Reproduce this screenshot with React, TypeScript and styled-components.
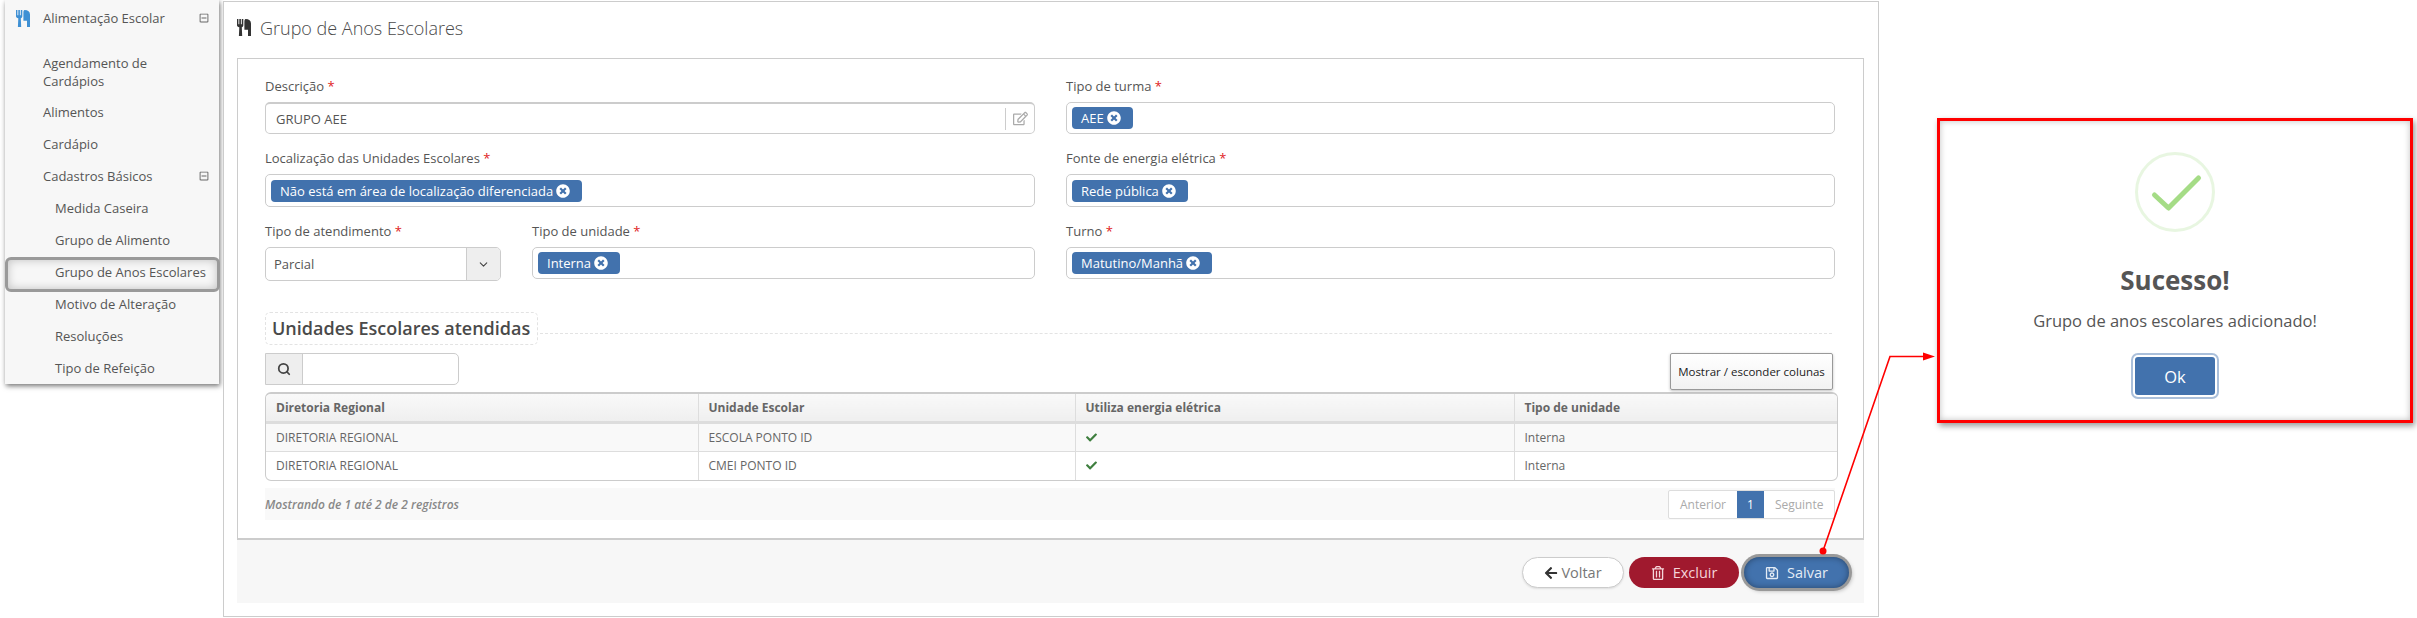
import styled, { createGlobalStyle } from 'styled-components';
import {
  FaArrowLeft,
  FaCheck,
  FaRegEdit,
  FaRegMinusSquare,
  FaRegSave,
  FaRegTrashAlt,
  FaTimesCircle,
} from 'react-icons/fa';
import { FiChevronDown, FiSearch } from 'react-icons/fi';

const menuItems = [
  { label: 'Agendamento de Cardápios', tall: true },
  { label: 'Alimentos' },
  { label: 'Cardápio' },
  { label: 'Cadastros Básicos', toggle: true },
  { label: 'Medida Caseira', sub: true },
  { label: 'Grupo de Alimento', sub: true },
  { label: 'Grupo de Anos Escolares', sub: true, active: true },
  { label: 'Motivo de Alteração', sub: true },
  { label: 'Resoluções', sub: true },
  { label: 'Tipo de Refeição', sub: true },
];

const rows = [
  { regional: 'DIRETORIA REGIONAL', school: 'ESCOLA PONTO ID', type: 'Interna' },
  { regional: 'DIRETORIA REGIONAL', school: 'CMEI PONTO ID', type: 'Interna' },
];

const CutleryIcon: React.FC<{ size: number }> = ({ size }) => (
  <svg width={(size * 14) / 17} height={size} viewBox="0 0 14 17" fill="currentColor">
    <path d="M0 0h1.4v5.2h.9V0h1.6v5.2h.9V0h1.5v6.2c0 1-.6 1.7-1.5 2l.4 8.8H1.9l.4-8.8C.8 7.9 0 7.2 0 6.2z" />
    <path d="M8.6 0C12 0 14 1.6 14 4.4V17h-3v-6.2H7.4V2.4C7.4 1 7.8 0 8.6 0z" />
  </svg>
);

const Tag: React.FC<{ label: string }> = ({ label }) => (
  <Chip>
    {label}
    <FaTimesCircle />
  </Chip>
);

const Field: React.FC<{ label: string; children: React.ReactNode }> = ({ label, children }) => (
  <FieldBox>
    <FieldLabel>
      {label} <Required>*</Required>
    </FieldLabel>
    {children}
  </FieldBox>
);

export default function App() {
  return (
    <>
      <GlobalStyle />
      <Page>
        <Sidebar>
          <MenuHead>
            <MenuHeadIcon>
              <CutleryIcon size={17} />
            </MenuHeadIcon>
            <MenuText>Alimentação Escolar</MenuText>
            <FaRegMinusSquare />
          </MenuHead>
          {menuItems.map((item) => (
            <MenuRow key={item.label} $sub={item.sub} $tall={item.tall} $active={item.active}>
              <MenuText>{item.label}</MenuText>
              {item.toggle && <FaRegMinusSquare />}
            </MenuRow>
          ))}
        </Sidebar>

        <Main>
          <TitleRow>
            <CutleryIcon size={17} />
            <Title>Grupo de Anos Escolares</Title>
          </TitleRow>
          <Panel>
            <FormGrid>
              <Field label="Descrição">
                <TextBox>
                  <InputValue>GRUPO AEE</InputValue>
                  <EditAddon>
                    <FaRegEdit />
                  </EditAddon>
                </TextBox>
              </Field>
              <Field label="Tipo de turma">
                <TagBox $height={32}>
                  <Tag label="AEE" />
                </TagBox>
              </Field>
              <Field label="Localização das Unidades Escolares">
                <TagBox $height={33}>
                  <Tag label="Não está em área de localização diferenciada" />
                </TagBox>
              </Field>
              <Field label="Fonte de energia elétrica">
                <TagBox $height={33}>
                  <Tag label="Rede pública" />
                </TagBox>
              </Field>
              <SplitCell>
                <Field label="Tipo de atendimento">
                  <SelectBox>
                    <SelectValue>Parcial</SelectValue>
                    <SelectCaret>
                      <FiChevronDown />
                    </SelectCaret>
                  </SelectBox>
                </Field>
                <Field label="Tipo de unidade">
                  <TagBox $height={32}>
                    <Tag label="Interna" />
                  </TagBox>
                </Field>
              </SplitCell>
              <Field label="Turno">
                <TagBox $height={32}>
                  <Tag label="Matutino/Manhã" />
                </TagBox>
              </Field>
            </FormGrid>

            <SectionHead>
              <SectionTitle>Unidades Escolares atendidas</SectionTitle>
              <SectionLine />
            </SectionHead>

            <Toolbar>
              <SearchBox>
                <SearchAddon>
                  <FiSearch />
                </SearchAddon>
              </SearchBox>
              <ColumnsButton>Mostrar / esconder colunas</ColumnsButton>
            </Toolbar>

            <TableFrame>
              <Table>
                <colgroup>
                  <col width={432} />
                  <col width={377} />
                  <col width={439} />
                  <col width={323} />
                </colgroup>
                <thead>
                  <tr>
                    <Th>Diretoria Regional</Th>
                    <Th>Unidade Escolar</Th>
                    <Th>Utiliza energia elétrica</Th>
                    <Th>Tipo de unidade</Th>
                  </tr>
                </thead>
                <tbody>
                  {rows.map((row) => (
                    <Tr key={row.school}>
                      <Td>{row.regional}</Td>
                      <Td>{row.school}</Td>
                      <Td>
                        <CheckMark />
                      </Td>
                      <Td>{row.type}</Td>
                    </Tr>
                  ))}
                </tbody>
              </Table>
            </TableFrame>

            <TableFooter>
              <RecordsInfo>Mostrando de 1 até 2 de 2 registros</RecordsInfo>
              <Pagination>
                <PageLink>Anterior</PageLink>
                <PageLink $current>1</PageLink>
                <PageLink>Seguinte</PageLink>
              </Pagination>
            </TableFooter>
          </Panel>
          <Actions>
            <BackButton>
              <FaArrowLeft />
              Voltar
            </BackButton>
            <DeleteButton>
              <FaRegTrashAlt />
              Excluir
            </DeleteButton>
            <SaveButton>
              <FaRegSave />
              Salvar
            </SaveButton>
          </Actions>
        </Main>

        <Modal>
          <SuccessIcon width="80" height="80" viewBox="0 0 80 80" fill="none">
            <circle cx="40" cy="40" r="38.5" stroke="#a5dc86" strokeOpacity="0.25" strokeWidth="3" />
            <path d="M19.5 43 33.5 56 63.5 26" stroke="#a5dc86" strokeWidth="5" strokeLinecap="round" strokeLinejoin="round" />
          </SuccessIcon>
          <ModalTitle>Sucesso!</ModalTitle>
          <ModalText>Grupo de anos escolares adicionado!</ModalText>
          <OkButton>Ok</OkButton>
        </Modal>

        <Callout width="2417" height="618" viewBox="0 0 2417 618" fill="none">
          <path d="M1823 551 1890 356.5H1926" stroke="#f00" strokeWidth="1.6" />
          <path d="M1923 352.5 1935 356.5 1923 360.5z" fill="#f00" />
          <circle cx="1823" cy="551" r="3.5" fill="#f00" />
        </Callout>
      </Page>
    </>
  );
}

const GlobalStyle = createGlobalStyle`
  html, body {
    margin: 0;
    background: #fff;
  }

  body {
    font-family: 'Open Sans', 'Liberation Sans', sans-serif;
    font-size: 13px;
    color: #555;
  }

  * {
    box-sizing: border-box;
  }
`;

const Page = styled.div`
  position: relative;
  display: flex;
  align-items: flex-start;
  width: 2417px;
  height: 618px;
  padding-left: 5px;
  overflow: hidden;
`;

const Sidebar = styled.nav`
  width: 214px;
  height: 384px;
  flex: none;
  padding-top: 2px;
  background: #f7f7f7;
  box-shadow: 1px 2px 5px rgba(0, 0, 0, 0.55);

  svg {
    flex: none;
  }
`;

const MenuHead = styled.div`
  display: flex;
  align-items: center;
  height: 32px;
  margin-bottom: 13px;
  padding: 0 10px 0 11px;

  > svg {
    width: 10px;
    height: 10px;
    color: #666;
  }
`;

const MenuHeadIcon = styled.span`
  display: flex;
  width: 27px;
  color: #3f90d4;
`;

const MenuRow = styled.div<{ $sub?: boolean; $tall?: boolean; $active?: boolean }>`
  position: relative;
  display: flex;
  align-items: center;
  height: ${(p) => (p.$tall ? 49 : 32)}px;
  padding: 0 10px 0 ${(p) => (p.$sub ? 50 : 38)}px;
  line-height: 18px;

  > svg {
    width: 10px;
    height: 10px;
    color: #666;
  }

  ${(p) =>
    p.$active &&
    `
    &::after {
      content: '';
      position: absolute;
      inset: 1px -1px -4px 0;
      border: 3px solid #9a9a9a;
      border-radius: 6px;
      box-shadow: inset 0 0 10px rgba(0, 0, 0, 0.22);
    }
  `}
`;

const MenuText = styled.span`
  flex: 1;
  color: #555;
`;

const Main = styled.main`
  width: 1656px;
  height: 616px;
  flex: none;
  margin: 1px 0 0 4px;
  padding: 0 14px 0 13px;
  border: 1px solid #ccc;
  background: #fff;
`;

const TitleRow = styled.div`
  display: flex;
  align-items: center;
  gap: 9px;
  height: 56px;
  padding-bottom: 5px;
  color: #333;
`;

const Title = styled.h1`
  margin: 0;
  font-size: 18px;
  font-weight: 300;
  color: #4a4a4a;
`;

const Panel = styled.section`
  height: 482px;
  padding: 19px 27px 0;
  border: 1px solid #ccc;
  border-bottom-width: 2px;
`;

const FormGrid = styled.div`
  display: grid;
  grid-template-columns: 770px 769px;
  column-gap: 31px;
  row-gap: 16px;
`;

const SplitCell = styled.div`
  display: grid;
  grid-template-columns: 236px 503px;
  column-gap: 31px;
`;

const FieldBox = styled.div`
  min-width: 0;
`;

const FieldLabel = styled.label`
  display: block;
  height: 18px;
  margin-bottom: 6px;
  line-height: 16px;
`;

const Required = styled.span`
  color: #e02222;
`;

const TextBox = styled.div`
  display: flex;
  align-items: center;
  height: 32px;
  border: 1px solid #ccc;
  border-top-width: 2px;
  border-radius: 5px;
`;

const InputValue = styled.span`
  flex: 1;
  padding-left: 10px;
`;

const EditAddon = styled.span`
  display: flex;
  align-items: center;
  justify-content: center;
  width: 29px;
  height: 22px;
  border-left: 1px solid #ccc;
  color: #aaa;
  font-size: 15px;
`;

const TagBox = styled.div<{ $height: number }>`
  display: flex;
  align-items: center;
  height: ${(p) => p.$height}px;
  padding: 0 5px;
  border: 1px solid #ccc;
  border-radius: 5px;
`;

const Chip = styled.span`
  display: inline-flex;
  align-items: center;
  gap: 3px;
  height: 22px;
  padding: 0 12px 0 9px;
  border-radius: 4px;
  background: #4272ad;
  color: #fff;
  white-space: nowrap;

  svg {
    width: 14px;
    height: 14px;
  }
`;

const SelectBox = styled.div`
  display: flex;
  align-items: stretch;
  height: 34px;
  border: 1px solid #ccc;
  border-radius: 5px;
  overflow: hidden;
`;

const SelectValue = styled.span`
  flex: 1;
  padding-left: 8px;
  line-height: 32px;
`;

const SelectCaret = styled.span`
  display: flex;
  align-items: center;
  justify-content: center;
  width: 34px;
  border-left: 1px solid #ccc;
  background: #eee;
  color: #444;
  font-size: 13px;
`;

const SectionHead = styled.div`
  display: flex;
  align-items: flex-start;
  margin-top: 31px;
  height: 41px;
`;

const SectionTitle = styled.h2`
  height: 33px;
  margin: 0;
  padding: 0 7px 0 6px;
  border: 1px dashed #e3e3e3;
  border-radius: 5px;
  font-size: 18px;
  font-weight: 600;
  line-height: 31px;
  color: #4a4a4a;
  white-space: nowrap;
`;

const SectionLine = styled.span`
  flex: 1;
  margin: 21px 4px 0 2px;
  border-top: 1px dashed #e3e3e3;
`;

const Toolbar = styled.div`
  display: flex;
  align-items: flex-start;
  justify-content: space-between;
  width: 1568px;
  height: 39px;
`;

const SearchBox = styled.div`
  display: flex;
  width: 194px;
  height: 32px;
  border: 1px solid #ccc;
  border-radius: 0 5px 5px 0;
`;

const SearchAddon = styled.span`
  display: flex;
  align-items: center;
  justify-content: center;
  width: 37px;
  border-right: 1px solid #ccc;
  background: #eee;
  color: #444;
  font-size: 14px;

  svg {
    stroke-width: 3;
  }
`;

const ColumnsButton = styled.button`
  position: relative;
  z-index: 1;
  width: 163px;
  height: 37px;
  padding: 0;
  border: 1px solid #999;
  border-radius: 2px;
  background: linear-gradient(#fff, #f2f2f2);
  box-shadow: 0 1px 3px rgba(0, 0, 0, 0.25);
  font: inherit;
  font-size: 11.5px;
  color: #222;
`;

const TableFrame = styled.div`
  width: 1573px;
  border: 1px solid #ccc;
  border-top: 2px solid #ccc;
  border-radius: 6px;
  overflow: hidden;
`;

const Table = styled.table`
  width: 100%;
  border-collapse: collapse;
  table-layout: fixed;
`;

const Th = styled.th`
  height: 28px;
  padding: 0 10px;
  border-left: 1px solid #ddd;
  border-bottom: 3px solid #ddd;
  background: linear-gradient(#f9f9f9, #efefef);
  font-size: 12px;
  font-weight: 700;
  text-align: left;
  color: #666;

  &:first-child {
    border-left: 0;
  }
`;

const Tr = styled.tr`
  &:nth-child(odd) {
    background: #f9f9f9;
  }

  &:not(:last-child) td {
    border-bottom: 1px solid #ddd;
  }
`;

const Td = styled.td`
  height: 29px;
  padding: 0 10px;
  border-left: 1px solid #ddd;
  font-size: 12px;
  color: #666;

  &:first-child {
    border-left: 0;
  }
`;

const CheckMark = styled(FaCheck)`
  display: block;
  width: 11px;
  height: 11px;
  color: #3f7f3f;
`;

const TableFooter = styled.div`
  display: flex;
  align-items: center;
  justify-content: space-between;
  width: 1570px;
  height: 32px;
  margin-top: 7px;
  background: #f9f9f9;
`;

const RecordsInfo = styled.span`
  font-size: 12px;
  font-style: italic;
  font-weight: 600;
  color: #888;
`;

const Pagination = styled.div`
  display: flex;
  height: 29px;
  border: 1px solid #ddd;
  border-radius: 2px;
  background: #fff;
`;

const PageLink = styled.span<{ $current?: boolean }>`
  padding: 0 10.5px;
  line-height: 27px;
  font-size: 12px;
  color: ${(p) => (p.$current ? '#fff' : '#aaa')};
  background: ${(p) => (p.$current ? '#4272ad' : 'transparent')};
`;

const Actions = styled.div`
  display: flex;
  justify-content: flex-end;
  gap: 5px;
  height: 63px;
  padding: 17px 15px 0 0;
  background: #f7f7f7;
`;

const PillButton = styled.button`
  display: inline-flex;
  align-items: center;
  justify-content: center;
  gap: 5px;
  height: 31px;
  padding: 0;
  border: 0;
  border-radius: 16px;
  font: inherit;
  font-size: 14.5px;

  svg {
    width: 14px;
    height: 14px;
  }
`;

const BackButton = styled(PillButton)`
  width: 102px;
  gap: 3px;
  border: 1px solid #ccc;
  background: #fff;
  color: #777;
  box-shadow: 0 1px 2px rgba(0, 0, 0, 0.1);

  svg {
    color: #333;
  }
`;

const DeleteButton = styled(PillButton)`
  width: 110px;
  gap: 8px;
  background: #a0192e;
  color: #f5d5da;
`;

const SaveButton = styled(PillButton)`
  width: 105px;
  gap: 8px;
  background: #4272ad;
  color: #e4ecf5;
  box-shadow: 0 0 0 3px #999, inset 0 0 6px rgba(0, 0, 0, 0.4), 2px 2px 5px rgba(0, 0, 0, 0.4);
`;

const Modal = styled.aside`
  display: flex;
  flex-direction: column;
  align-items: center;
  width: 476px;
  height: 305px;
  flex: none;
  margin: 118px 0 0 58px;
  padding-top: 31px;
  border: 3px solid #f00;
  background: #fff;
  box-shadow: 2px 3px 6px rgba(0, 0, 0, 0.4), inset 0 0 6px rgba(0, 0, 0, 0.25);
`;

const SuccessIcon = styled.svg`
  flex: none;
`;

const ModalTitle = styled.h2`
  margin: 28px 0 0;
  font-size: 26px;
  font-weight: 700;
  line-height: 40px;
  color: #555;
`;

const ModalText = styled.p`
  margin: 10px 0 0;
  font-size: 16.5px;
  line-height: 22px;
  color: #555;
`;

const OkButton = styled.button`
  width: 80px;
  height: 38px;
  margin-top: 25px;
  border: 0;
  border-radius: 3px;
  background: #4272ad;
  box-shadow: 0 0 0 2px #fff, 0 0 0 4px rgba(66, 114, 173, 0.45);
  font: inherit;
  font-size: 16.5px;
  color: #fff;
`;

const Callout = styled.svg`
  position: absolute;
  top: 0;
  left: 0;
  pointer-events: none;
`;
